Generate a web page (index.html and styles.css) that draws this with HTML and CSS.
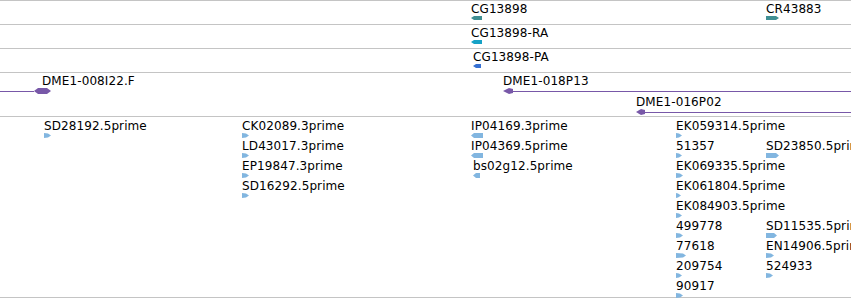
FILE: index.html
```html
<!DOCTYPE html>
<html>
<head>
<meta charset="utf-8">
<link rel="stylesheet" href="styles.css">
</head>
<body>
<div class="panel">
  <div class="track">
    <div class="feat" style="left:471px">
      <span class="lbl">CG13898</span>
      <svg class="glyph teal" width="11" height="4"><polygon points="0,2 3,0 11,0 11,4 3,4"/></svg>
    </div>
    <div class="feat" style="left:766px">
      <span class="lbl">CR43883</span>
      <svg class="glyph teal" width="13" height="4"><polygon points="0,0 10,0 13,2 10,4 0,4"/></svg>
    </div>
  </div>
  <div class="track">
    <div class="feat" style="left:471px">
      <span class="lbl">CG13898-RA</span>
      <svg class="glyph cyan" width="11" height="4"><polygon points="0,2 3,0 11,0 11,4 3,4"/></svg>
    </div>
  </div>
  <div class="track">
    <div class="feat" style="left:473px">
      <span class="lbl">CG13898-PA</span>
      <svg class="glyph blue" width="8" height="4"><polygon points="0,2 3,0 8,0 8,4 3,4"/></svg>
    </div>
  </div>
  <div class="track tall">
    <div class="feat clone" style="left:0;width:51px">
      <span class="lbl" style="padding-left:42px">DME1-008I22.F</span>
      <div class="cglyph">
        <div class="cline"></div>
        <svg class="purple" width="17" height="6"><polygon points="0,3 4,0 13,0 17,3 13,6 4,6"/></svg>
      </div>
    </div>
    <div class="feat clone" style="left:503px;right:0">
      <span class="lbl">DME1-018P13</span>
      <div class="cglyph">
        <svg class="purple" width="10" height="6"><polygon points="0,3 6,0 10,1 10,5 6,6"/></svg>
        <div class="cline"></div>
      </div>
    </div>
    <div class="feat clone row2" style="left:636px;right:0">
      <span class="lbl">DME1-016P02</span>
      <div class="cglyph">
        <svg class="purple" width="9" height="6"><polygon points="0,3 5,0 9,1 9,5 5,6"/></svg>
        <div class="cline"></div>
      </div>
    </div>
  </div>
  <div class="track est">
    <div class="col" style="left:44px">
      <div class="efeat"><span class="lbl">SD28192.5prime</span><svg class="glyph sky" width="7" height="5"><polygon points="0,0 4,0.5 7,2.5 4,4.5 0,5"/></svg></div>
    </div>
    <div class="col" style="left:242px">
      <div class="efeat"><span class="lbl">CK02089.3prime</span><svg class="glyph sky" width="7" height="5"><polygon points="0,0 4,0.5 7,2.5 4,4.5 0,5"/></svg></div>
      <div class="efeat"><span class="lbl">LD43017.3prime</span><svg class="glyph sky" width="7" height="5"><polygon points="0,0 4,0.5 7,2.5 4,4.5 0,5"/></svg></div>
      <div class="efeat"><span class="lbl">EP19847.3prime</span><svg class="glyph sky" width="7" height="5"><polygon points="0,0 4,0.5 7,2.5 4,4.5 0,5"/></svg></div>
      <div class="efeat"><span class="lbl">SD16292.5prime</span><svg class="glyph sky" width="7" height="5"><polygon points="0,0 4,0.5 7,2.5 4,4.5 0,5"/></svg></div>
    </div>
    <div class="col" style="left:471px">
      <div class="efeat"><span class="lbl">IP04169.3prime</span><svg class="glyph sky" width="12" height="5"><polygon points="0,2.5 3,0 12,0 12,5 3,5"/></svg></div>
      <div class="efeat"><span class="lbl">IP04369.5prime</span><svg class="glyph sky" width="12" height="5"><polygon points="0,2.5 3,0 12,0 12,5 3,5"/></svg></div>
      <div class="efeat" style="margin-left:2px"><span class="lbl">bs02g12.5prime</span><svg class="glyph sky" width="7" height="5"><polygon points="0,2.5 3,0 7,0 7,5 3,5"/></svg></div>
    </div>
    <div class="col" style="left:676px">
      <div class="efeat"><span class="lbl">EK059314.5prime</span><svg class="glyph sky" width="6" height="5"><polygon points="0,0 3,0.5 6,2.5 3,4.5 0,5"/></svg></div>
      <div class="efeat"><span class="lbl">51357</span><svg class="glyph sky" width="6" height="5"><polygon points="0,0 3,0.5 6,2.5 3,4.5 0,5"/></svg></div>
      <div class="efeat"><span class="lbl">EK069335.5prime</span><svg class="glyph sky" width="7" height="5"><polygon points="0,0 4,0.5 7,2.5 4,4.5 0,5"/></svg></div>
      <div class="efeat"><span class="lbl">EK061804.5prime</span><svg class="glyph sky" width="5" height="5"><polygon points="0,0 2,0.5 5,2.5 2,4.5 0,5"/></svg></div>
      <div class="efeat"><span class="lbl">EK084903.5prime</span><svg class="glyph sky" width="6" height="5"><polygon points="0,0 3,0.5 6,2.5 3,4.5 0,5"/></svg></div>
      <div class="efeat"><span class="lbl">499778</span><svg class="glyph sky" width="7" height="5"><polygon points="0,0 4,0.5 7,2.5 4,4.5 0,5"/></svg></div>
      <div class="efeat"><span class="lbl">77618</span><svg class="glyph sky" width="10" height="5"><polygon points="0,0 7,0.5 10,2.5 7,4.5 0,5"/></svg></div>
      <div class="efeat"><span class="lbl">209754</span><svg class="glyph sky" width="6" height="5"><polygon points="0,0 3,0.5 6,2.5 3,4.5 0,5"/></svg></div>
      <div class="efeat"><span class="lbl">90917</span><svg class="glyph sky" width="7" height="5"><polygon points="0,0 4,0.5 7,2.5 4,4.5 0,5"/></svg></div>
    </div>
    <div class="col" style="left:766px;top:23px">
      <div class="efeat"><span class="lbl">SD23850.5prime</span><svg class="glyph sky" width="13" height="5"><polygon points="0,0 10,0 13,2.5 10,5 0,5"/></svg></div>
    </div>
    <div class="col" style="left:766px;top:103px">
      <div class="efeat"><span class="lbl">SD11535.5prime</span><svg class="glyph sky" width="11" height="5"><polygon points="0,0 8,0 11,2.5 8,5 0,5"/></svg></div>
      <div class="efeat"><span class="lbl">EN14906.5prime</span><svg class="glyph sky" width="8" height="5"><polygon points="0,0 5,0.5 8,2.5 5,4.5 0,5"/></svg></div>
      <div class="efeat"><span class="lbl">524933</span><svg class="glyph sky" width="7" height="5"><polygon points="0,0 4,0.5 7,2.5 4,4.5 0,5"/></svg></div>
    </div>
  </div>
</div>
</body>
</html>
```
FILE: styles.css
```css
html, body {
  margin: 0;
  padding: 0;
  background: #ffffff;
}
body {
  width: 851px;
  height: 300px;
  overflow: hidden;
  font-family: "DejaVu Sans", "Liberation Sans", sans-serif;
  font-size: 12px;
  color: #000000;
}
.panel {
  border-top: 1px solid #c4c4c4;
  overflow: hidden;
}
.track {
  position: relative;
  height: 23px;
  border-bottom: 1px solid #c4c4c4;
}
.track.tall {
  height: 43px;
}
.track.est {
  height: 180px;
}
.feat {
  position: absolute;
  top: 2px;
}
.feat.row2 {
  top: 23px;
}
.lbl {
  display: block;
  line-height: 12px;
  height: 12px;
  white-space: nowrap;
  letter-spacing: 0.1px;
}
.glyph {
  display: block;
  margin-top: 1px;
}
.cglyph {
  display: flex;
  margin-top: 1px;
  height: 6px;
}
.cglyph svg {
  display: block;
  flex: none;
}
.cline {
  flex: 1;
  height: 1px;
  margin-top: 3px;
  background: #7858a8;
}
.col {
  position: absolute;
  top: 3px;
  display: flex;
  flex-direction: column;
}
.efeat {
  height: 20px;
}
.teal { fill: #3f8f93; }
.cyan { fill: #16a2c6; }
.blue { fill: #3670d2; }
.purple { fill: #7858a8; }
.sky { fill: #82b6e0; }
```
